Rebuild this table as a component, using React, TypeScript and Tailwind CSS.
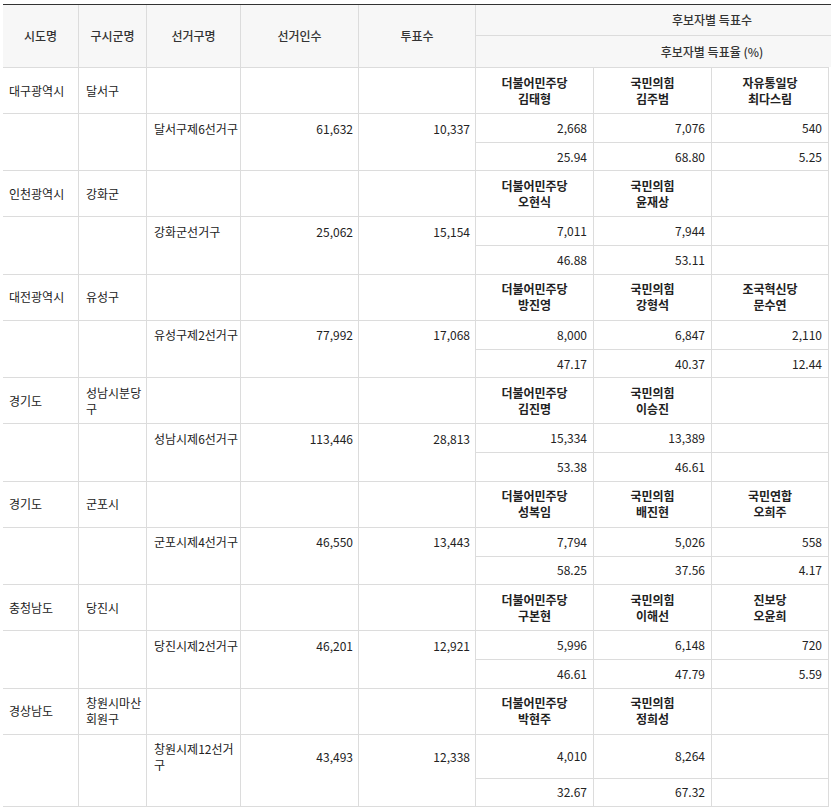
import React from "react";

type Cand = { party: string; name: string; votes: string; pct: string };
type Row = {
  sido: React.ReactNode;
  sigungu: React.ReactNode;
  district: React.ReactNode;
  electors: string;
  voters: string;
  cands: Cand[];
};

const rows: Row[] = [
  {
    sido: "대구광역시",
    sigungu: "달서구",
    district: "달서구제6선거구",
    electors: "61,632",
    voters: "10,337",
    cands: [
      { party: "더불어민주당", name: "김태형", votes: "2,668", pct: "25.94" },
      { party: "국민의힘", name: "김주범", votes: "7,076", pct: "68.80" },
      { party: "자유통일당", name: "최다스림", votes: "540", pct: "5.25" },
    ],
  },
  {
    sido: "인천광역시",
    sigungu: "강화군",
    district: "강화군선거구",
    electors: "25,062",
    voters: "15,154",
    cands: [
      { party: "더불어민주당", name: "오현식", votes: "7,011", pct: "46.88" },
      { party: "국민의힘", name: "윤재상", votes: "7,944", pct: "53.11" },
    ],
  },
  {
    sido: "대전광역시",
    sigungu: "유성구",
    district: "유성구제2선거구",
    electors: "77,992",
    voters: "17,068",
    cands: [
      { party: "더불어민주당", name: "방진영", votes: "8,000", pct: "47.17" },
      { party: "국민의힘", name: "강형석", votes: "6,847", pct: "40.37" },
      { party: "조국혁신당", name: "문수연", votes: "2,110", pct: "12.44" },
    ],
  },
  {
    sido: "경기도",
    sigungu: (
      <>
        성남시분당
        <br />구
      </>
    ),
    district: "성남시제6선거구",
    electors: "113,446",
    voters: "28,813",
    cands: [
      { party: "더불어민주당", name: "김진명", votes: "15,334", pct: "53.38" },
      { party: "국민의힘", name: "이승진", votes: "13,389", pct: "46.61" },
    ],
  },
  {
    sido: "경기도",
    sigungu: "군포시",
    district: "군포시제4선거구",
    electors: "46,550",
    voters: "13,443",
    cands: [
      { party: "더불어민주당", name: "성복임", votes: "7,794", pct: "58.25" },
      { party: "국민의힘", name: "배진현", votes: "5,026", pct: "37.56" },
      { party: "국민연합", name: "오희주", votes: "558", pct: "4.17" },
    ],
  },
  {
    sido: "충청남도",
    sigungu: "당진시",
    district: "당진시제2선거구",
    electors: "46,201",
    voters: "12,921",
    cands: [
      { party: "더불어민주당", name: "구본현", votes: "5,996", pct: "46.61" },
      { party: "국민의힘", name: "이해선", votes: "6,148", pct: "47.79" },
      { party: "진보당", name: "오윤희", votes: "720", pct: "5.59" },
    ],
  },
  {
    sido: "경상남도",
    sigungu: (
      <>
        창원시마산
        <br />
        회원구
      </>
    ),
    district: (
      <>
        창원시제12선거
        <br />구
      </>
    ),
    electors: "43,493",
    voters: "12,338",
    cands: [
      { party: "더불어민주당", name: "박현주", votes: "4,010", pct: "32.67" },
      { party: "국민의힘", name: "정희성", votes: "8,264", pct: "67.32" },
    ],
  },
];

const B = "border-r border-[#dcdcdc]";

function Block({ r }: { r: Row }) {
  const c = [0, 1, 2].map((i) => r.cands[i]);
  return (
    <>
      {/* party / name row */}
      <div className={`${B} border-b min-h-[46px] flex items-center pl-[6px] pr-[4px]`}>{r.sido}</div>
      <div className={`${B} border-b min-h-[46px] flex items-center pl-[7px] pr-[4px]`}>
        <span>{r.sigungu}</span>
      </div>
      <div className={`${B} border-b min-h-[46px]`}></div>
      <div className={`${B} border-b min-h-[46px]`}></div>
      <div className={`${B} border-b min-h-[46px]`}></div>
      {c.map((x, i) => (
        <div
          key={"p" + i}
          className={`${B} border-b min-h-[46px] flex flex-col items-center justify-center font-bold text-[#222]`}
        >
          {x && (
            <>
              <span>{x.party}</span>
              <span>{x.name}</span>
            </>
          )}
        </div>
      ))}
      {/* votes row */}
      <div className={`${B} py-[6px]`}></div>
      <div className={`${B} py-[6px]`}></div>
      <div className={`${B} py-[6px] pl-[7px] pr-[4px] flex items-center whitespace-nowrap`}>
        <span>{r.district}</span>
      </div>
      <div className={`${B} py-[6px] pr-[5px] flex items-center justify-end`}>{r.electors}</div>
      <div className={`${B} py-[6px] pr-[5px] flex items-center justify-end`}>{r.voters}</div>
      {c.map((x, i) => (
        <div key={"v" + i} className={`${B} border-b py-[6px] pr-[6px] flex items-center justify-end`}>
          {x ? x.votes : ""}
        </div>
      ))}
      {/* pct row */}
      <div className={`${B} border-b min-h-[28.43px]`}></div>
      <div className={`${B} border-b min-h-[28.43px]`}></div>
      <div className={`${B} border-b min-h-[28.43px]`}></div>
      <div className={`${B} border-b min-h-[28.43px]`}></div>
      <div className={`${B} border-b min-h-[28.43px]`}></div>
      {c.map((x, i) => (
        <div key={"q" + i} className={`${B} border-b min-h-[28.43px] pr-[6px] flex items-center justify-end`}>
          {x ? x.pct : ""}
        </div>
      ))}
    </>
  );
}

export default function App() {
  return (
    <div
      className="bg-white w-[831px] h-[811px] pt-[4px] pl-[3px] text-[12px] leading-[16px] text-[#222] overflow-hidden"
      style={{ fontFamily: '"Noto Sans CJK KR", "Noto Sans", sans-serif' }}
    >
      <div className="border-t border-[#333] w-[945px]">
        <div className="grid grid-cols-[76px_68px_94px_118px_117px_472px] grid-rows-[31px_31px] bg-[#f7f7f7] text-[#333] font-medium">
          <div className={`${B} row-span-2 flex items-center justify-center`}>시도명</div>
          <div className={`${B} row-span-2 flex items-center justify-center`}>구시군명</div>
          <div className={`${B} row-span-2 flex items-center justify-center`}>선거구명</div>
          <div className={`${B} row-span-2 flex items-center justify-center`}>선거인수</div>
          <div className={`${B} row-span-2 flex items-center justify-center`}>투표수</div>
          <div className="border-b border-[#dcdcdc] flex items-center justify-center">후보자별 득표수</div>
          <div className="flex items-center justify-center">후보자별 득표율 (%)</div>
        </div>
      </div>
      <div className="w-[826px] border-t border-[#dcdcdc] grid grid-cols-[76px_68px_94px_118px_117px_118px_118px_117px]">
        {rows.map((r, i) => (
          <Block key={i} r={r} />
        ))}
      </div>
    </div>
  );
}
